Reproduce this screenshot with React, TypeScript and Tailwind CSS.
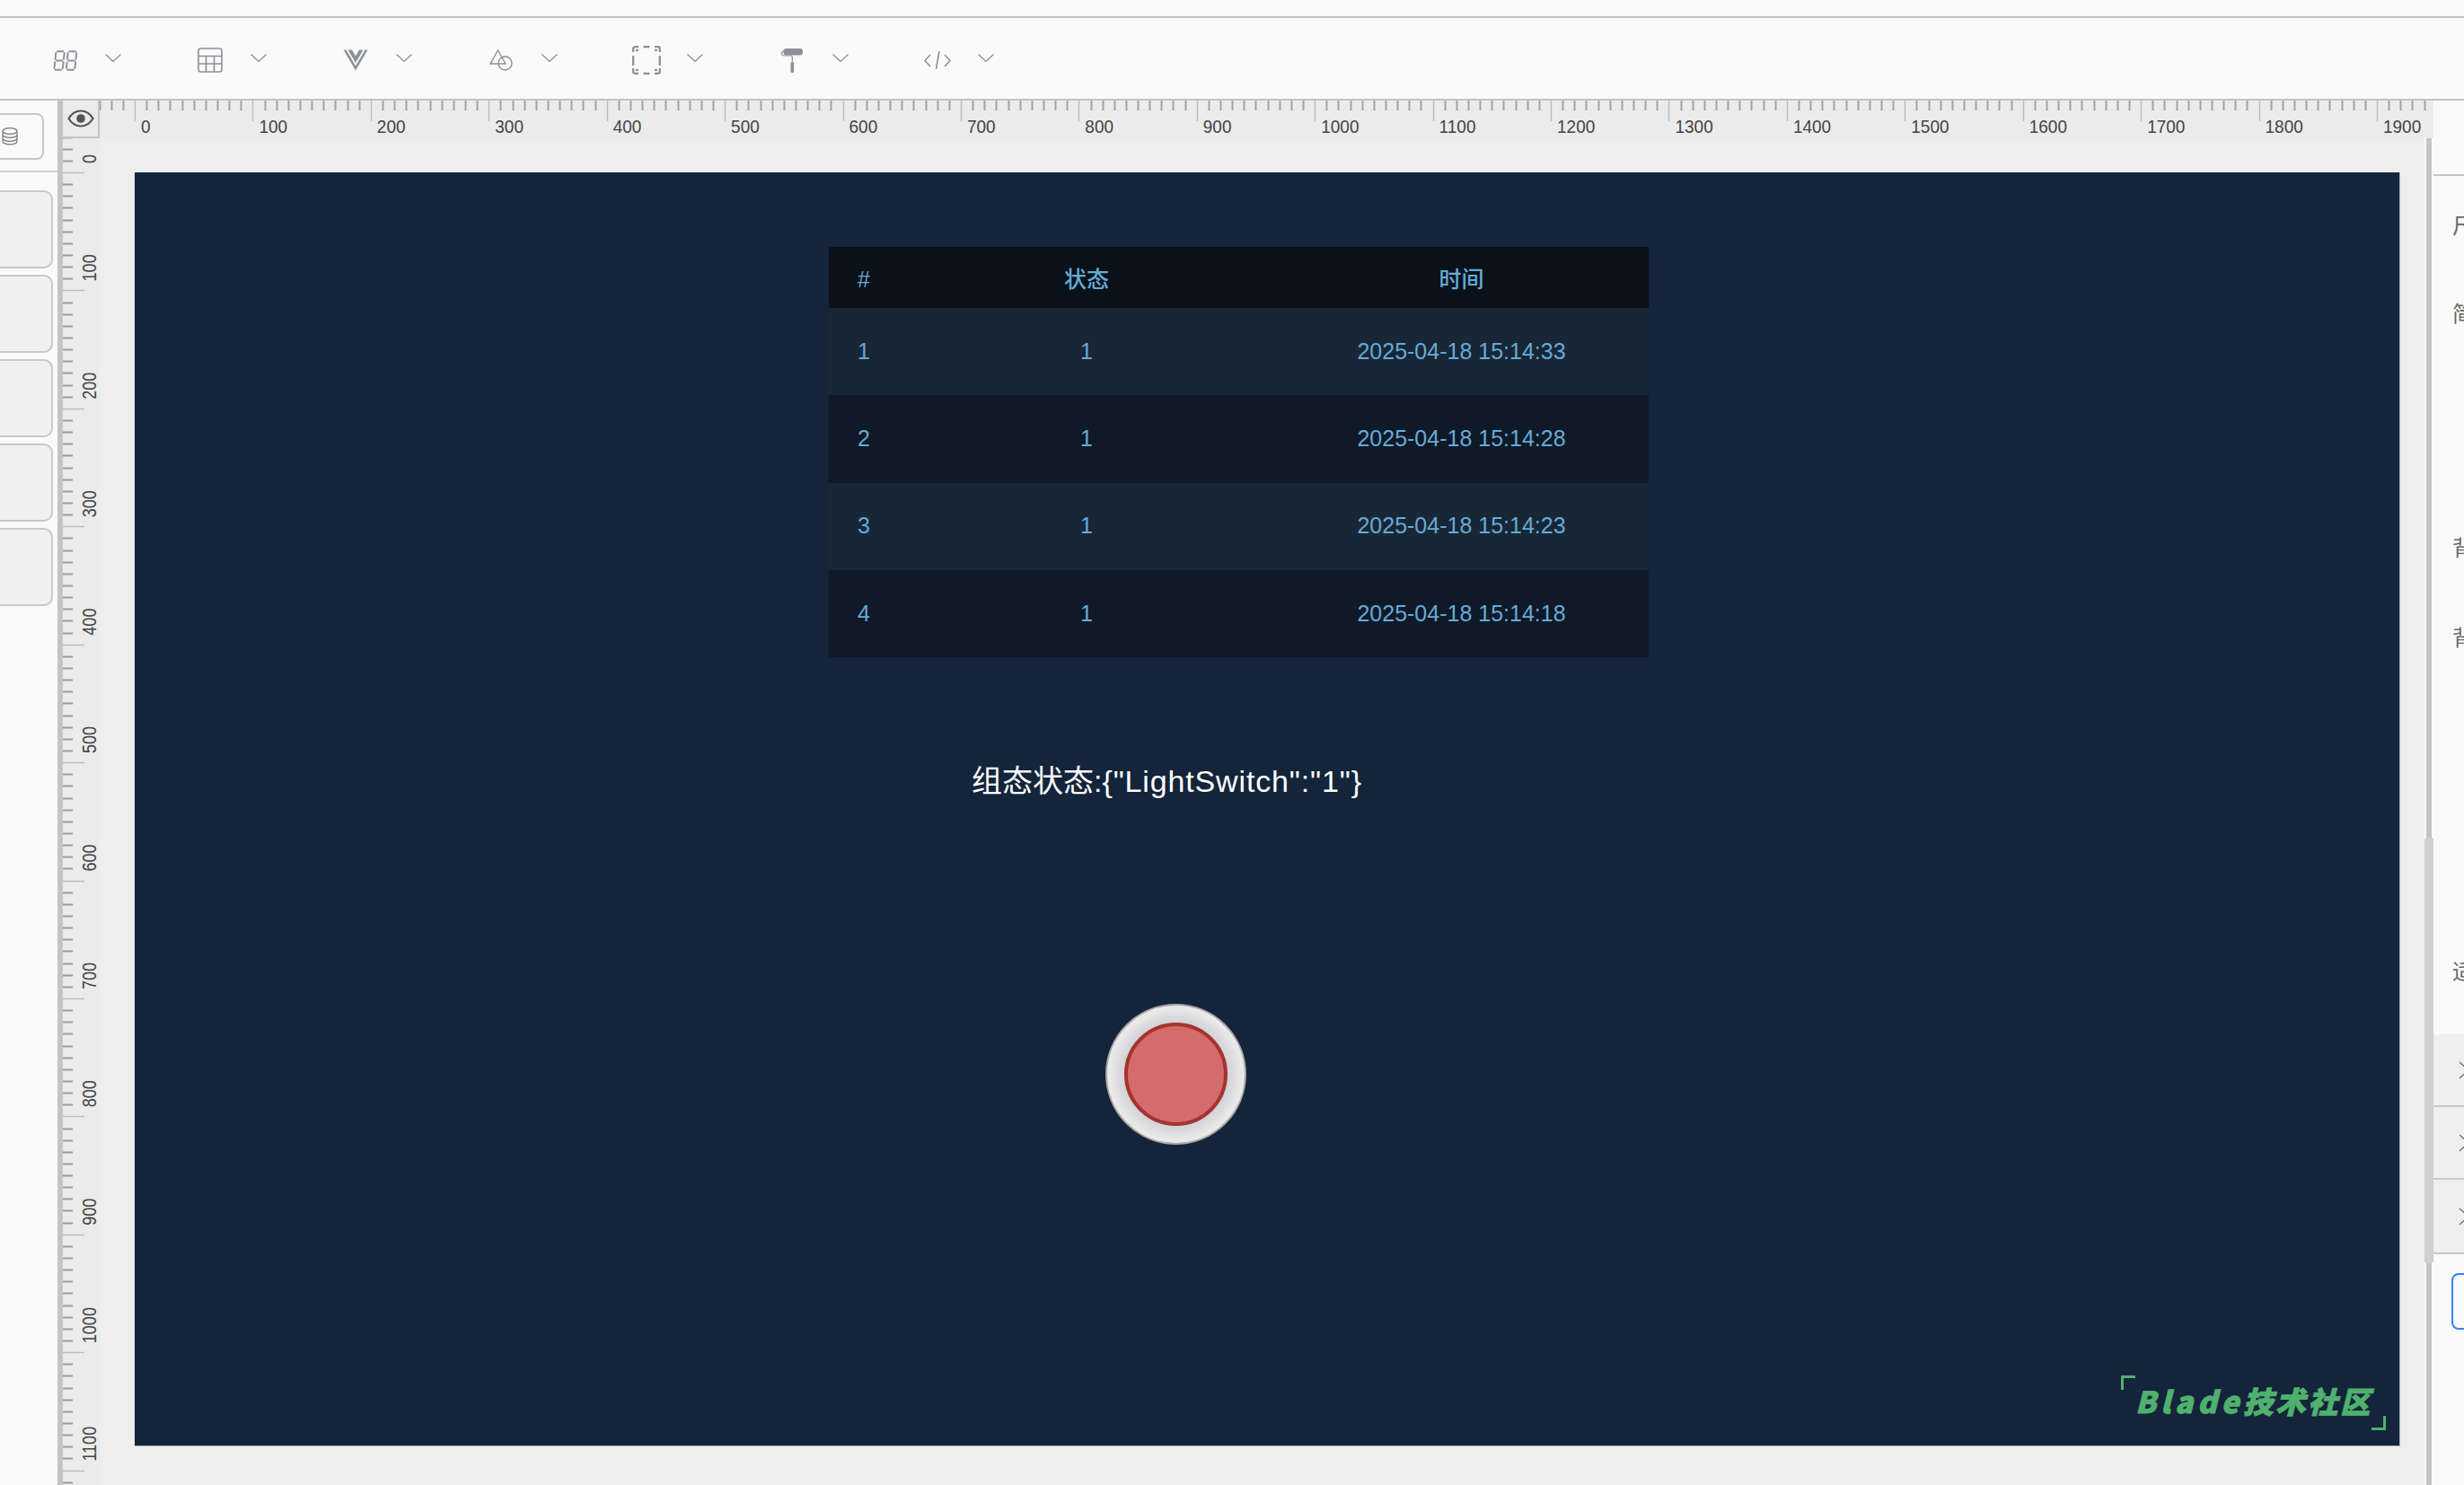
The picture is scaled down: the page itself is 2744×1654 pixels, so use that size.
import React from 'react';

const SANS = 'font-["Liberation_Sans","Noto_Sans_CJK_SC",sans-serif]';

const ICON_STROKE = '#8d9197';

const rows = [
  { id: 1, status: 1, time: '2025-04-18 15:14:33' },
  { id: 2, status: 1, time: '2025-04-18 15:14:28' },
  { id: 3, status: 1, time: '2025-04-18 15:14:23' },
  { id: 4, status: 1, time: '2025-04-18 15:14:18' },
];

const Digits = () => (
  <svg width="28" height="23" viewBox="0 0 28 23" fill="none" stroke={ICON_STROKE} strokeWidth="2" strokeLinecap="round">
    <g transform="skewX(-6) translate(3 0)">
      <path d="M3 1.300h6.500M1.600 3v6.700M11 3v6.700M3 11.500h6.500M1.600 13.300V20M11 13.300V20M3 21.700h6.500" />
      <path d="M16.500 1.300H23M15 3v6.700M24.500 3v6.700M16.500 11.500H23M15 13.300V20M24.500 13.300V20M16.500 21.700H23" />
    </g>
  </svg>
);

const TableIcon = () => (
  <svg width="28" height="28" viewBox="0 0 28 28" fill="none" stroke={ICON_STROKE} strokeWidth="1.600">
    <rect x="1" y="1" width="26" height="26" rx="2.500" />
    <path d="M1 9.500h26M1 18h26M9.500 9.500V27M18.500 9.500V27" />
  </svg>
);

const VueIcon = () => (
  <svg width="28" height="24" viewBox="0 0 28 24" fill={ICON_STROKE}>
    <path d="M0.500 0.500H3.500L14 18.600 24.500 0.500H27.500L14 23.500z" />
    <path d="M5.500 0.500H10L14 7.500 18 0.500H22.500L14 15z" />
  </svg>
);

const ShapesIcon = () => (
  <svg width="26" height="24" viewBox="0 0 26 24" fill="none" stroke={ICON_STROKE} strokeWidth="1.400">
    <path d="M9.500 1 1 16h17z" />
    <circle cx="17.500" cy="15.500" r="7.500" />
  </svg>
);

const SelectIcon = () => (
  <svg width="32" height="32" viewBox="0 0 32 32" fill="none" stroke={ICON_STROKE} strokeWidth="2.300">
    <path d="M1.200 7V3.200a2 2 0 0 1 2-2H7M12.500 1.200h7M25 1.200h3.800a2 2 0 0 1 2 2V7M30.800 11v11M30.800 25v3.800a2 2 0 0 1-2 2H25M19.500 30.800h-7M7 30.800H3.200a2 2 0 0 1-2-2V25M1.200 22V11" />
    <path d="M5 5h1M26 5h1M5 27h1M26 27h1" strokeLinecap="round" />
  </svg>
);

const RollerIcon = () => (
  <svg width="24" height="27" viewBox="0 0 24 27" fill="none">
    <rect x="2.500" y="0" width="21.500" height="7.500" rx="3" fill={ICON_STROKE} />
    <path d="M3 3H2a1.300 1.300 0 0 0-1.300 1.300v1.600A2 2 0 0 0 2.700 8h8.200a1.400 1.400 0 0 1 1.400 1.400V15" stroke={ICON_STROKE} strokeWidth="1.200" />
    <rect x="10.500" y="15" width="3.600" height="12" rx="1.600" fill={ICON_STROKE} />
  </svg>
);

const CodeIcon = () => (
  <svg width="30" height="20" viewBox="0 0 30 20" fill="none" stroke={ICON_STROKE} strokeWidth="1.600">
    <path d="M7 4 1 10.500 7 17M23 4l6 6.500-6 6.500M17 0l-3.500 20" />
  </svg>
);

const Chevron = () => (
  <svg width="18" height="9" viewBox="0 0 18 9" fill="none" stroke="#8d9197" strokeWidth="1.300">
    <path d="M0.500 0.500 9 8.500 17.500 0.500" />
  </svg>
);

const toolbarIcons = [Digits, TableIcon, VueIcon, ShapesIcon, SelectIcon, RollerIcon, CodeIcon];

const DbIcon = () => (
  <svg width="19" height="20" viewBox="0 0 19 20" fill="none" stroke="#777" strokeWidth="1.200">
    <ellipse cx="9" cy="4" rx="8" ry="3.400" />
    <path d="M1 4v4c0 1.900 3.600 3.400 8 3.400s8-1.500 8-3.400V4M1 8v4c0 1.900 3.600 3.400 8 3.400s8-1.500 8-3.400V8M1 12v3.500c0 1.900 3.600 3.400 8 3.400s8-1.500 8-3.400V12" />
  </svg>
);

const EyeIcon = () => (
  <svg width="30" height="20" viewBox="0 0 30 20" fill="none">
    <path d="M1.500 10C5 4 10 1.500 15 1.500S25 4 28.500 10C25 16 20 18.500 15 18.500S5 16 1.500 10z" stroke="#555" strokeWidth="2.200" />
    <circle cx="15" cy="10" r="4.800" fill="#555" />
  </svg>
);

// 100 ruler units are 131.42 screen pixels, the 0 mark sits on the canvas edge
const UNIT = 1.3142;

const TopRuler = () => {
  const ticks = [];
  for (let v = -30; v <= 1950; v += 10) ticks.push(v);
  const labels = [];
  for (let v = 0; v <= 1900; v += 100) labels.push(v);
  return (
    <svg width="2599" height="42" className="block" style={{ fontFamily: 'Liberation Sans' }}>
      {ticks.map((v) => {
        const x = Math.round(39 + v * UNIT) + 0.5;
        const major = v % 100 === 0;
        return <line key={v} x1={x} x2={x} y1={0} y2={major ? 23 : 11} stroke={major ? '#bdbdbd' : '#a3a3a3'} strokeWidth={major ? 1.5 : 2} />;
      })}
      {labels.map((v) => (
        <text key={v} x={0} y={0} fontSize={20} fill="#444" transform={`translate(${39 + v * UNIT + 7} 35.5) scale(0.95 1)`}>
          {v}
        </text>
      ))}
    </svg>
  );
};

const LeftRuler = () => {
  const ticks = [];
  for (let v = -30; v <= 1110; v += 10) ticks.push(v);
  const labels = [];
  for (let v = 0; v <= 1100; v += 100) labels.push(v);
  return (
    <svg width="41" height="1500" className="block" style={{ fontFamily: 'Liberation Sans' }}>
      {ticks.map((v) => {
        const y = Math.round(38 + v * UNIT) + 0.5;
        const major = v % 100 === 0;
        return <line key={v} x1={0} x2={major ? 24 : 11} y1={y} y2={y} stroke={major ? '#bdbdbd' : '#9b9b9b'} strokeWidth={major ? 1.5 : 2} />;
      })}
      {labels.map((v) => (
        <text key={v} x={0} y={0} fontSize={22} fill="#444" transform={`translate(36.5 ${38 + v * UNIT - 10}) rotate(-90) scale(0.82 1)`}>
          {v}
        </text>
      ))}
    </svg>
  );
};

const DataTable = () => (
  <div className={`absolute left-[773px] top-[83px] w-[913px] ${SANS} text-[#64abd8]`}>
    <div className="grid h-[68px] grid-cols-[78px_418px_417px] items-center bg-[#0a1118] pt-[5px] text-center text-[25px] font-medium">
      <span>#</span>
      <span>状态</span>
      <span>时间</span>
    </div>
    {rows.map((row) => (
      <div
        key={row.id}
        className={`grid h-[97.25px] grid-cols-[78px_418px_417px] items-center text-center text-[25px] ${
          row.id % 2 === 1 ? 'bg-[#192636]' : 'bg-[#0f1927]'
        }`}
      >
        <span>{row.id}</span>
        <span>{row.status}</span>
        <span>{row.time}</span>
      </div>
    ))}
  </div>
);

const LightButton = () => (
  <div className="absolute left-[1081px] top-[926px] flex h-[157px] w-[157px] items-center justify-center rounded-full border-2 border-[#a9a5a5] bg-[radial-gradient(circle_closest-side,#d0d0d7_74%,#e9e9e9_96%)]">
    <div className="h-[115px] w-[115px] rounded-full border-4 border-[#a5332e] bg-[#d36c6b]" />
  </div>
);

const Watermark = () => (
  <div className="absolute left-[2212px] top-[1340px] h-[61px] w-[295px]">
    <div className="absolute left-0 top-0 h-4 w-4 border-l-[3px] border-t-[3px] border-[#4fb06f]" />
    <div className="absolute bottom-0 right-0 h-4 w-4 border-b-[3px] border-r-[3px] border-[#4fb06f]" />
    <div className="absolute left-4 top-2 whitespace-nowrap font-['Noto_Sans_CJK_SC',sans-serif] text-[33px] font-black italic leading-[40px] text-[#4fb06f] [-webkit-text-stroke:1px_#4fb06f]">
      <span className="tracking-[5px]">Blade</span>
      <span className="tracking-[3px]">技术社区</span>
    </div>
  </div>
);

const App = () => {
  return (
    <div className={`flex h-[1654px] w-[2744px] flex-col overflow-hidden bg-[#fafafa] ${SANS}`}>
      <div className="h-5 shrink-0 border-b-2 border-[#c4c4c4]" />

      <div className="flex h-[92px] shrink-0 items-center border-b-2 border-[#c4c4c4] pl-[54px] pt-1">
        {toolbarIcons.map((Icon, i) => (
          <div key={i} className="flex w-[162px] items-center">
            <div className="flex w-9 justify-center">
              <Icon />
            </div>
            <div className="ml-[27px] -translate-y-[3px]">
              <Chevron />
            </div>
          </div>
        ))}
      </div>

      <div className="flex min-h-0 flex-1">
        <aside className="w-[70px] shrink-0 border-r-[6px] border-[#c4c4c4]">
          <div className="h-[80px] border-b-2 border-[#d0d0d0] pt-[14px]">
            <div className="-ml-4 flex h-[52px] w-[65px] items-center rounded-lg border-2 border-[#c8c8c8] pl-4">
              <DbIcon />
            </div>
          </div>
          <div className="-ml-4 mt-[20px] flex w-[75px] flex-col gap-[7px]">
            {[0, 1, 2, 3, 4].map((i) => (
              <div key={i} className="h-[87px] rounded-[10px] border-2 border-[#c8c8c8] bg-[#f0f0f0]" />
            ))}
          </div>
        </aside>

        <main className="flex w-[2640px] shrink-0 flex-col">
          <div className="flex h-[42px] shrink-0 bg-[#ebebeb]">
            <div className="flex h-[42px] w-[41px] shrink-0 items-center justify-center border-b-2 border-r-2 border-[#c4c4c4]">
              <EyeIcon />
            </div>
            <TopRuler />
          </div>
          <div className="flex min-h-0 flex-1">
            <div className="w-[41px] shrink-0 overflow-hidden bg-[#ebebeb]">
              <LeftRuler />
            </div>
            <div className="relative w-[2589px] shrink-0 bg-[#eeeeee]">
              <div className="absolute left-[39px] top-[38px] h-[1419px] w-[2523px] border-b border-r border-[#aab3c0] bg-[#14243a]">
                <DataTable />
                <div className="absolute left-[932px] top-[653px] whitespace-nowrap text-[34px] leading-[50px] text-white">
                  组态状态:<span className="tracking-[0.85px]">{'{'}"LightSwitch":"1"{'}'}</span>
                </div>
                <LightButton />
                <Watermark />
              </div>
            </div>
            <div className="ml-[2px] w-[6px] shrink-0 bg-[#c4c4c4]" />
          </div>
        </main>

        <aside className="relative w-[34px] shrink-0 text-[24px] leading-[30px] text-[#666]">
          <div className="h-[84px] border-b-2 border-[#c4c4c4]" />
          <div className="pl-[21px]">
            <div className="mt-[41px] h-[30px] whitespace-nowrap">尺寸</div>
            <div className="mt-[68px] h-[30px] whitespace-nowrap">简介</div>
            <div className="mt-[231px] h-[30px] whitespace-nowrap">背景</div>
            <div className="mt-[70px] h-[30px] whitespace-nowrap">背景</div>
            <div className="mt-[342px] h-[30px] whitespace-nowrap">适配</div>
          </div>
          <div className="mt-[54px]">
            {[81, 81, 83].map((h, i) => (
              <div key={i} style={{ height: h }} className="flex items-center border-b-2 border-[#c8c8c8] bg-[#efefef] pl-[28px]">
                <svg width="12" height="20" viewBox="0 0 12 20" fill="none" stroke="#777" strokeWidth="1.400" className="shrink-0">
                  <path d="M1 1l10 9-10 9" />
                </svg>
              </div>
            ))}
          </div>
          <div className="ml-5 mt-[21px] h-[63px] w-[60px] rounded-lg border-2 border-[#3b82f6]" />
          <div className="absolute -left-[10px] top-[821px] h-[474px] w-[10px] rounded-[3px] bg-[#cfcfcf]" />
        </aside>
      </div>
    </div>
  );
};

export default App;
